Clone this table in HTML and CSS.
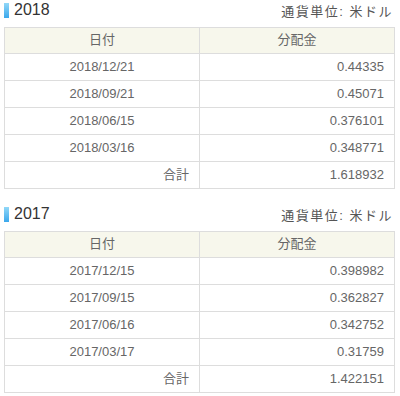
FILE: index.html
```html
<!DOCTYPE html>
<html lang="ja">

<head>
    <meta charset="UTF-8">
    <title>分配金</title>
    <link rel="stylesheet" href="styles.css">
</head>

<body>
    <div class="dist_wrap">
        <div class="dist_section">
            <div class="dist_head">
                <h3 class="dist_year">2018</h3>
                <p class="dist_unit">通貨単位: 米ドル</p>
            </div>
            <table class="dist_table">
                <tr>
                    <th>日付</th>
                    <th>分配金</th>
                </tr>
                <tr>
                    <td class="date">2018/12/21</td>
                    <td class="num">0.44335</td>
                </tr>
                <tr>
                    <td class="date">2018/09/21</td>
                    <td class="num">0.45071</td>
                </tr>
                <tr>
                    <td class="date">2018/06/15</td>
                    <td class="num">0.376101</td>
                </tr>
                <tr>
                    <td class="date">2018/03/16</td>
                    <td class="num">0.348771</td>
                </tr>
                <tr>
                    <td class="num">合計</td>
                    <td class="num">1.618932</td>
                </tr>
            </table>
        </div>
        <div class="dist_section">
            <div class="dist_head">
                <h3 class="dist_year">2017</h3>
                <p class="dist_unit">通貨単位: 米ドル</p>
            </div>
            <table class="dist_table">
                <tr>
                    <th>日付</th>
                    <th>分配金</th>
                </tr>
                <tr>
                    <td class="date">2017/12/15</td>
                    <td class="num">0.398982</td>
                </tr>
                <tr>
                    <td class="date">2017/09/15</td>
                    <td class="num">0.362827</td>
                </tr>
                <tr>
                    <td class="date">2017/06/16</td>
                    <td class="num">0.342752</td>
                </tr>
                <tr>
                    <td class="date">2017/03/17</td>
                    <td class="num">0.31759</td>
                </tr>
                <tr>
                    <td class="num">合計</td>
                    <td class="num">1.422151</td>
                </tr>
            </table>
        </div>
    </div>
</body>

</html>
```
FILE: styles.css
```css
html,body,h3,p,table,div {
    padding: 0;
    margin: 0;
    box-sizing: border-box;
}
body {
    font-family: "Liberation Sans", "Noto Sans CJK JP", sans-serif;
    color: #666;
    background-color: #fff;
}
.dist_wrap {
    padding: 0 5px 0 4px;
}
.dist_section {
    margin-bottom: 15px;
}
.dist_head {
    display: flex;
    justify-content: space-between;
    align-items: center;
    height: 20px;
    margin-bottom: 7px;
}
.dist_year {
    font-size: 16px;
    font-weight: normal;
    color: #333;
    line-height: 16px;
    display: flex;
    align-items: center;
}
.dist_year::before {
    content: "";
    display: block;
    width: 5px;
    height: 15px;
    margin-right: 5px;
    background: linear-gradient(to bottom, #92d8f8, #3ba8ec);
}
.dist_unit {
    font-size: 13px;
    letter-spacing: 1.5px;
    color: #555;
    margin-right: 2px;
}
.dist_table {
    width: 100%;
    border-collapse: collapse;
    font-size: 13px;
    border: 1px solid #ddd;
}
.dist_table th,
.dist_table td {
    width: 50%;
    border: 1px solid #ddd;
    line-height: 16px;
    padding: 5px 10px;
    font-weight: normal;
}
.dist_table th {
    background-color: #f7f7ec;
    padding: 4px 10px 5px;
    text-align: center;
}
.dist_table td.date {
    text-align: center;
}
.dist_table td.num {
    text-align: right;
}
```
